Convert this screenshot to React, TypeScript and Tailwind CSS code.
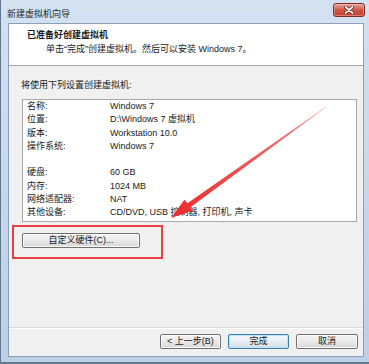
const rows = [
  { label: "名称:", value: "Windows 7" },
  { label: "位置:", value: "D:\\Windows 7 虚拟机" },
  { label: "版本:", value: "Workstation 10.0" },
  { label: "操作系统:", value: "Windows 7" },
  { label: "", value: "" },
  { label: "硬盘:", value: "60 GB" },
  { label: "内存:", value: "1024 MB" },
  { label: "网络适配器:", value: "NAT" },
  { label: "其他设备:", value: "CD/DVD, USB 控制器, 打印机, 声卡" },
];

function CloseButton() {
  return (
    <div className="mt-[3px] w-[32px] h-[14px] rounded-[3px] border border-[#7b2e25] bg-gradient-to-b from-[#e6a99c] via-[#cf5445] to-[#c2402f] flex items-center justify-center shadow-[inset_0_0_0_1px_rgba(255,200,190,0.45)]">
      <svg width="10" height="8" viewBox="0 0 10 8">
        <path d="M1.5 1 L8.5 7 M8.5 1 L1.5 7" stroke="#5a1d16" strokeWidth="3.2" strokeLinecap="round" />
        <path d="M1.5 1 L8.5 7 M8.5 1 L1.5 7" stroke="#ffffff" strokeWidth="1.7" strokeLinecap="round" />
      </svg>
    </div>
  );
}

function WinButton({ label, width, primary }: { label: string; width: string; primary?: boolean }) {
  return (
    <div
      className={
        primary
          ? `${width} h-[15px] rounded-[2px] border border-[#3c7fb1] bg-gradient-to-b from-[#f4f8fb] via-[#e6eef5] to-[#d3dde6] shadow-[inset_0_0_0_1px_#bde4f8] flex items-center justify-center leading-none`
          : `${width} h-[15px] rounded-[2px] border border-[#707070] bg-gradient-to-b from-[#f4f4f4] via-[#e9e9e9] to-[#d6d6d6] shadow-[inset_0_0_0_1px_#fcfcfc] flex items-center justify-center leading-none`
      }
    >
      {label}
    </div>
  );
}

export default function App() {
  return (
    <div className="relative w-[369px] h-[364px] overflow-hidden bg-gradient-to-b from-[#d3e1f1] to-[#bccfe6] border-l border-b-2 border-[#62768c] text-[9px] text-[#1a1a1a] font-['Liberation_Sans','Noto_Sans_CJK_SC',sans-serif]">
      {/* Title bar */}
      <div className="h-[23px] flex items-start justify-between pl-[6px] pr-[4px]">
        <span className="mt-[8px] leading-[12px] text-[#262626]">新建虚拟机向导</span>
        <CloseButton />
      </div>

      {/* Client */}
      <div className="ml-[7px] w-[356px] h-[334px] border border-[#8aa0b8] bg-[#f0f0f0] flex flex-col">
        {/* Header */}
        <div className="h-[42px] bg-white border-b border-[#a3a3a3] pl-[18px] pt-[5px]">
          <div className="font-bold leading-[12px]">已准备好创建虚拟机</div>
          <div className="mt-[2px] pl-[19px] leading-[12px]">单击“完成”创建虚拟机。然后可以安装 Windows 7。</div>
        </div>

        {/* Body */}
        <div className="flex-1 pl-[13px] pt-[13px]">
          <div className="-ml-[1px] leading-[12px]">将使用下列设置创建虚拟机:</div>
          <div className="mt-[8px] w-[335px] border border-[#a8a8a8] bg-white pl-[4px] pb-[1px]">
            {rows.map((row, i) => (
              <div key={i} className="grid grid-cols-[83px_1fr] h-[13.3px] leading-[13.3px]">
                <span>{row.label}</span>
                <span>{row.value}</span>
              </div>
            ))}
          </div>
          <div className="mt-[11px]">
            <WinButton label="自定义硬件(C)..." width="w-[118px]" />
          </div>
        </div>

        {/* Footer */}
        <div className="border-t border-[#d9d9d9]">
          <div className="border-t border-white pt-[5px] pb-[7px] pr-[5px] flex justify-end gap-[7px]">
            <WinButton label="< 上一步(B)" width="w-[61px]" />
            <WinButton label="完成" width="w-[61px]" primary />
            <WinButton label="取消" width="w-[62px]" />
          </div>
        </div>
      </div>

      {/* Annotation: red box */}
      <div className="absolute left-[11px] top-[225px] w-[151px] h-[34px] border-2 border-[#e8403f]" />

      {/* Annotation: arrow */}
      <svg className="absolute left-0 top-0 pointer-events-none" width="369" height="364" viewBox="0 0 369 364">
        <defs>
          <linearGradient id="arrowGrad" gradientUnits="userSpaceOnUse" x1="325" y1="107" x2="170" y2="218">
            <stop offset="0" stopColor="#f7c4c4" />
            <stop offset="0.25" stopColor="#f06a6a" />
            <stop offset="1" stopColor="#ec2a2a" />
          </linearGradient>
        </defs>
        <polygon
          points="324.8,106.8 186.4,203.2 183.4,199.8 170,218 192.2,210.6 189.4,207.2 325.2,107.2"
          fill="url(#arrowGrad)"
        />
      </svg>
    </div>
  );
}
